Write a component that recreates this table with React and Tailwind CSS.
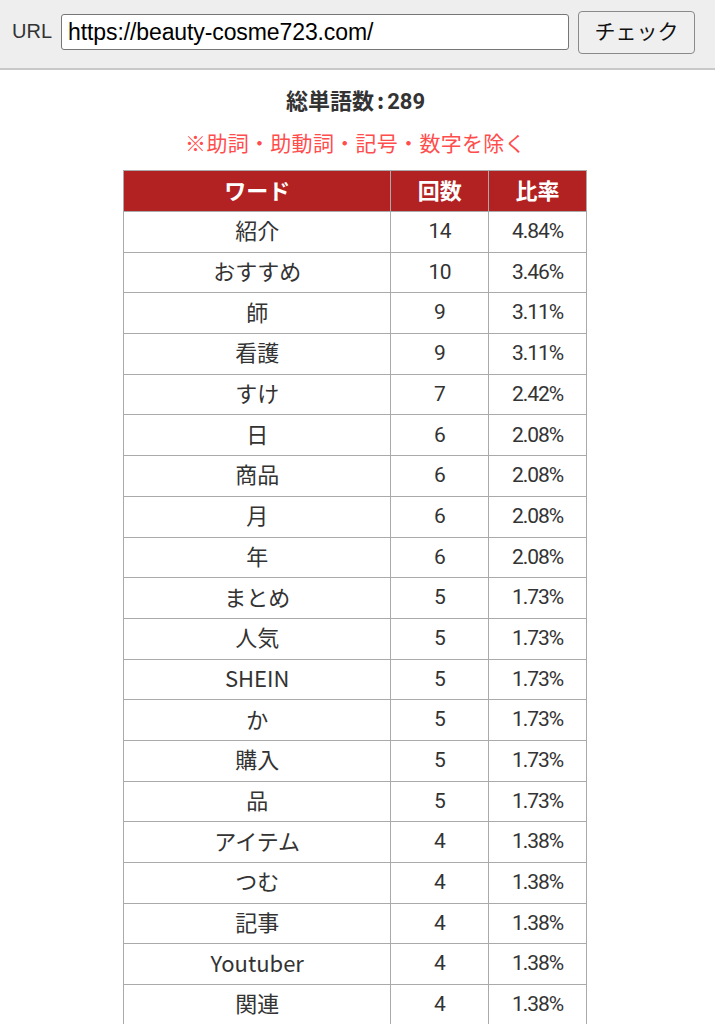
import React from "react";

const rows = [
  ["紹介", "14", "4.84%"],
  ["おすすめ", "10", "3.46%"],
  ["師", "9", "3.11%"],
  ["看護", "9", "3.11%"],
  ["すけ", "7", "2.42%"],
  ["日", "6", "2.08%"],
  ["商品", "6", "2.08%"],
  ["月", "6", "2.08%"],
  ["年", "6", "2.08%"],
  ["まとめ", "5", "1.73%"],
  ["人気", "5", "1.73%"],
  ["SHEIN", "5", "1.73%"],
  ["か", "5", "1.73%"],
  ["購入", "5", "1.73%"],
  ["品", "5", "1.73%"],
  ["アイテム", "4", "1.38%"],
  ["つむ", "4", "1.38%"],
  ["記事", "4", "1.38%"],
  ["Youtuber", "4", "1.38%"],
  ["関連", "4", "1.38%"],
];

const narrow = { fontFamily: 'Roboto, "Noto Sans CJK JP", sans-serif' };

export default function App() {
  return (
    <div className="w-[715px] h-[1024px] overflow-hidden bg-white" style={{ fontFamily: '"Noto Sans CJK JP", "Noto Sans", sans-serif' }}>
      <div className="h-[70px] bg-[#eeeeee] border-b-2 border-[#c8c8c8] flex items-center pl-[12px]">
        <span className="text-[20px] text-[#333] mr-[9px] mt-[-6px]" style={{ fontFamily: '"Liberation Sans", Arial, sans-serif' }}>URL</span>
        <div className="w-[508px] h-[36px] bg-white border border-[#767676] rounded-[3px] flex items-center pl-[6px] mt-[-4px] overflow-hidden">
          <span className="text-[23px] text-black tracking-[-0.1px] whitespace-nowrap" style={{ fontFamily: '"Liberation Sans", Arial, sans-serif' }}>https://beauty-cosme723.com/</span>
        </div>
        <div className="ml-[9px] w-[117px] h-[43px] bg-[#efefef] border border-[#8a8a8a] rounded-[4px] flex items-center justify-center text-[21px] text-[#111] mt-[-4px] pb-[2px]">
          チェック
        </div>
      </div>
      <div className="flex flex-col items-center">
        <div className="mt-[13px] text-[22px] font-bold text-[#333] leading-[32px] ml-[-4px]">
          総単語数<span className="mx-[3px]">:</span><span style={narrow}>289</span>
        </div>
        <div className="mt-[8px] text-[21px] text-[#ff4d4d] leading-[32px] ml-[-4px] tracking-[0.3px]">※助詞・助動詞・記号・数字を除く</div>
        <table className="mt-[12px] border-collapse w-[464px] text-[22px] text-[#333] ml-[-5px]">
          <thead>
            <tr className="bg-[#b22222] text-white font-bold text-[22px]">
              <th className="border border-[#aaaaaa] w-[268px] h-[41px] font-bold p-0 pb-[3px]">ワード</th>
              <th className="border border-[#aaaaaa] w-[98px] h-[41px] font-bold p-0 pb-[3px]">回数</th>
              <th className="border border-[#aaaaaa] w-[98px] h-[41px] font-bold p-0 pb-[3px]">比率</th>
            </tr>
          </thead>
          <tbody>
            {rows.map((r, i) => (
              <tr key={i}>
                <td className="border border-[#aaaaaa] h-[40.7px] text-center p-0 pb-[4px]">{r[0]}</td>
                <td className="border border-[#aaaaaa] h-[40.7px] text-center p-0 text-[21px] tracking-[-0.5px]" style={narrow}>{r[1]}</td>
                <td className="border border-[#aaaaaa] h-[40.7px] text-center p-0 text-[21px] tracking-[-1px]" style={narrow}>{r[2]}</td>
              </tr>
            ))}
          </tbody>
        </table>
      </div>
    </div>
  );
}
